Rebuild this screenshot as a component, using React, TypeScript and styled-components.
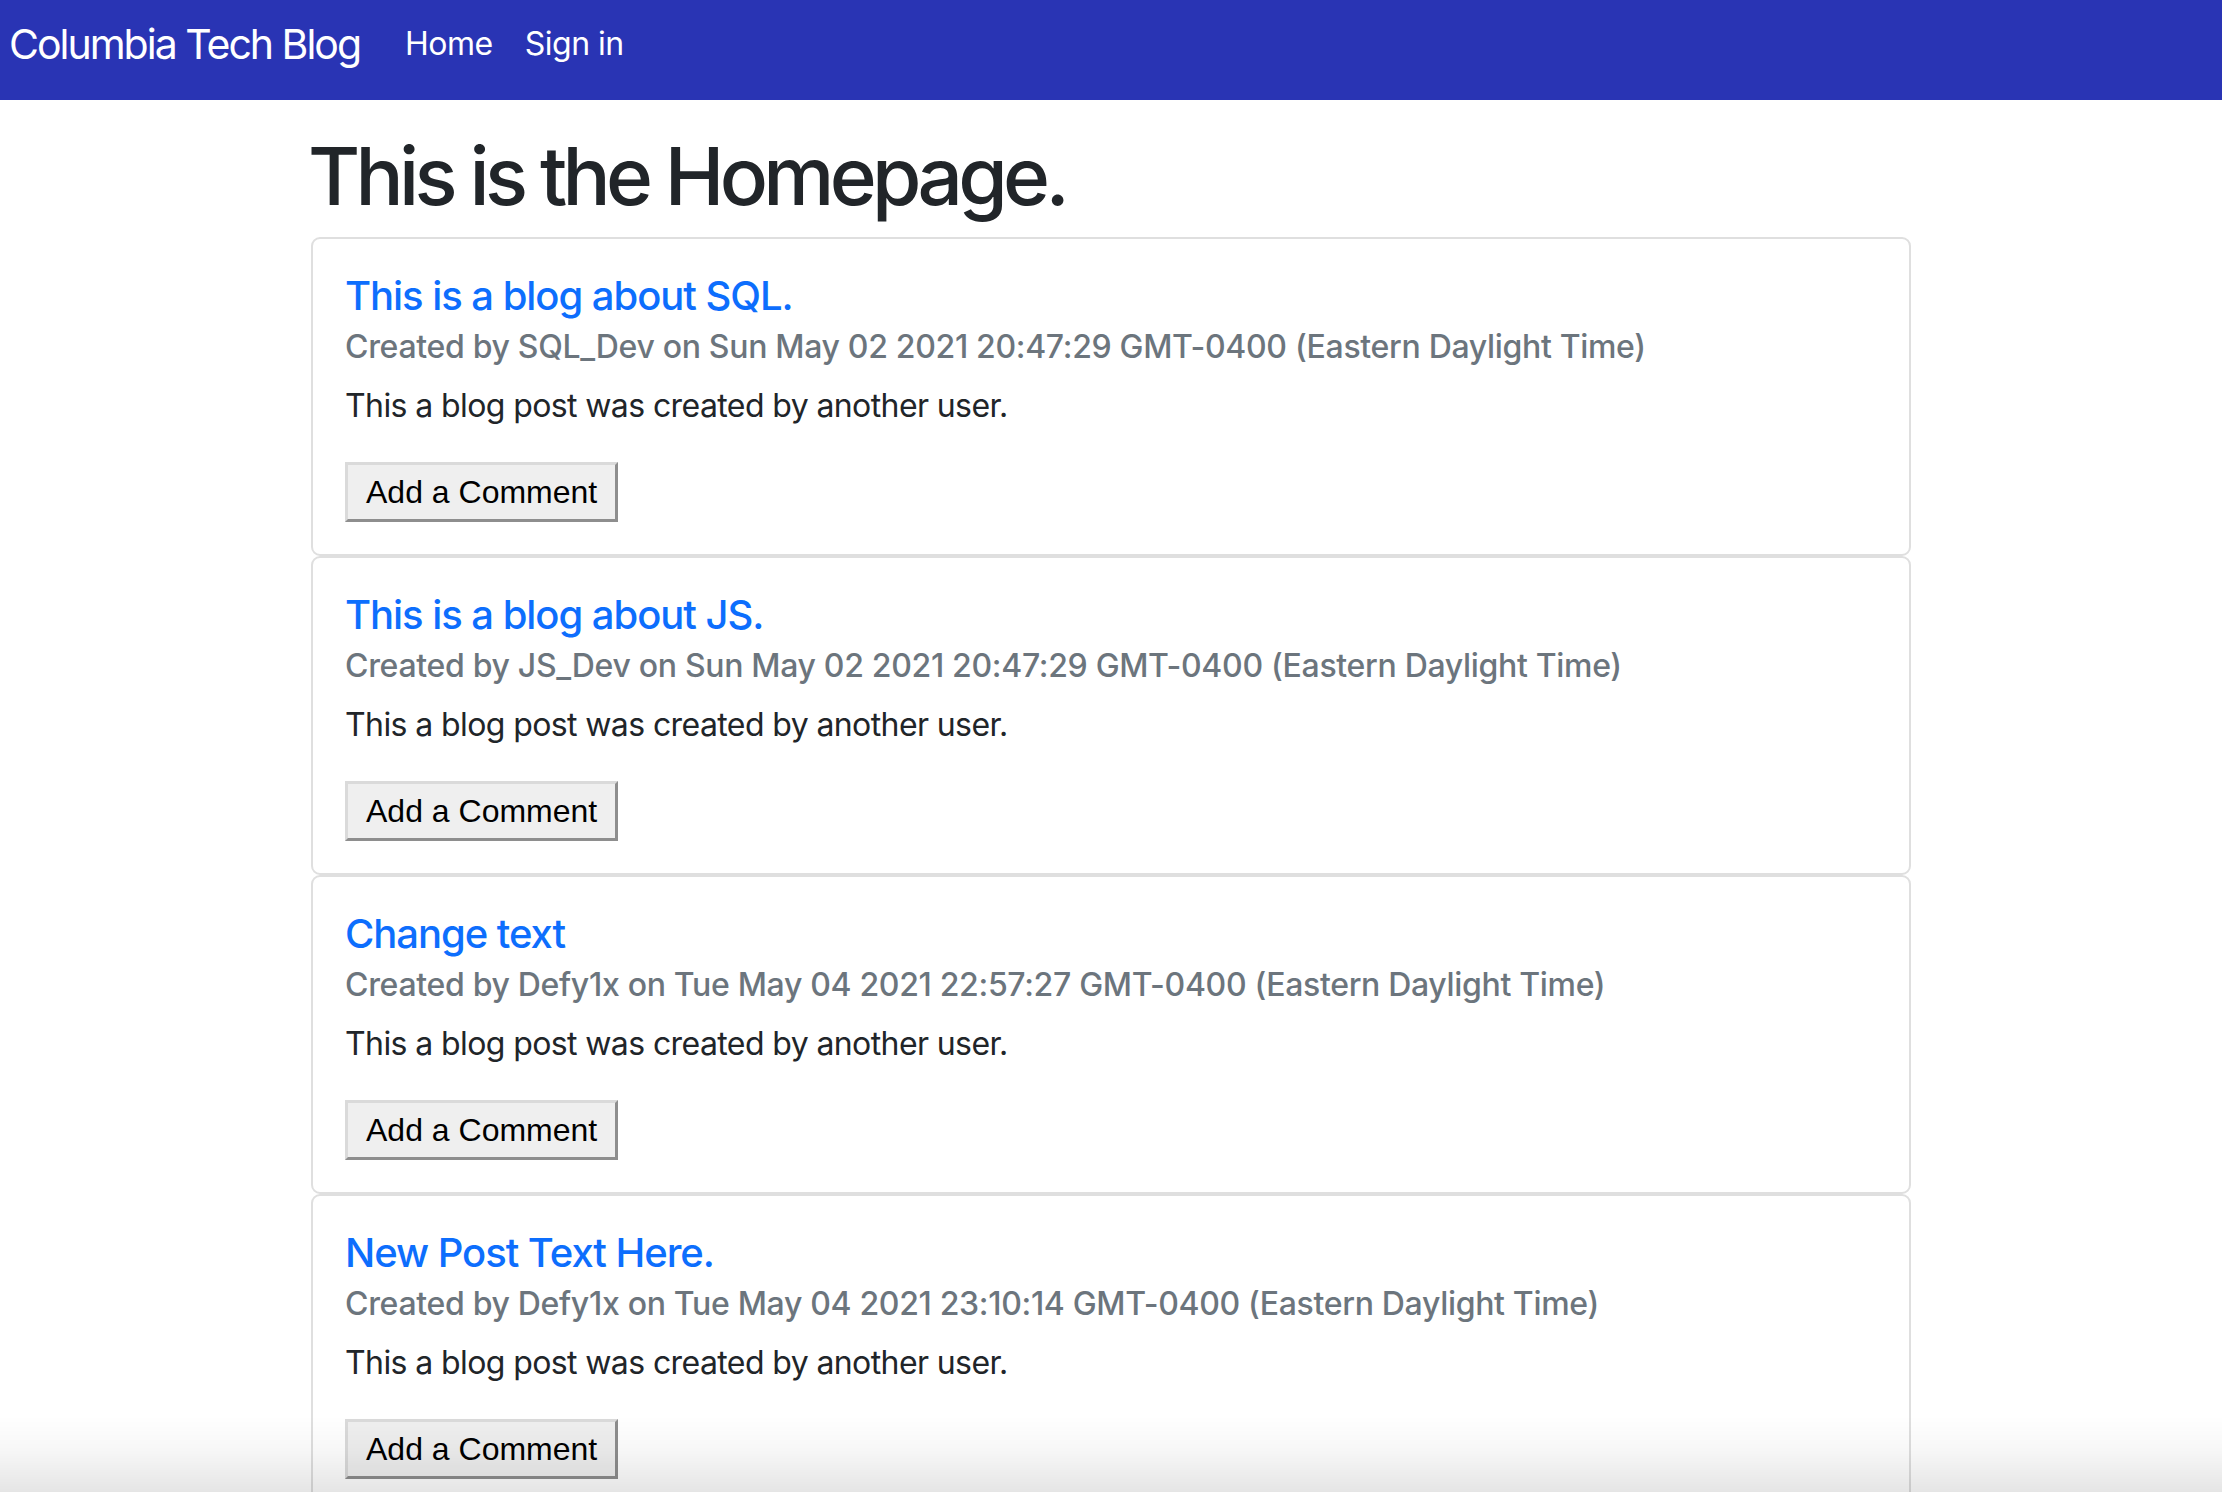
import React from "react";
import styled, { createGlobalStyle } from "styled-components";

const GlobalStyle = createGlobalStyle`
  html, body {
    margin: 0;
    padding: 0;
    background: #ffffff;
  }
  body {
    font-family: Inter, "Noto Sans", "Liberation Sans", sans-serif;
    color: #212529;
    -webkit-font-smoothing: antialiased;
  }
  * { box-sizing: border-box; }
`;

const NavBar = styled.nav`
  height: 100px;
  background: #2934b4;
  display: flex;
  align-items: center;
  padding: 0 0 12px 9px;
`;

const Brand = styled.a`
  font-size: 41px;
  line-height: 50px;
  color: #ffffff;
  text-decoration: none;
  margin-right: 29px;
  white-space: nowrap;
  letter-spacing: -2px;
`;

const NavLinks = styled.div`
  display: flex;
  align-items: center;
`;

const NavLink = styled.a`
  font-size: 32px;
  line-height: 40px;
  color: #ffffff;
  text-decoration: none;
  padding: 0 16px;
  white-space: nowrap;
  letter-spacing: -0.5px;
`;

const Main = styled.main`
  width: 1600px;
  margin: 0 auto;
`;

const PageTitle = styled.h1`
  font-size: 80px;
  line-height: 96px;
  font-weight: 500;
  margin: 28px 0 13px -3px;
  color: #212529;
  letter-spacing: -4.7px;
`;

const PostList = styled.div`
  display: flex;
  flex-direction: column;
`;

const Card = styled.article`
  border: 2px solid #dfdfdf;
  border-radius: 9px;
  padding: 32px;
  background: #fff;
`;

const CardTitle = styled.a`
  display: block;
  font-size: 40px;
  line-height: 48px;
  font-weight: 500;
  color: #0d6efd;
  text-decoration: none;
  margin: 1px 0 8px;
  letter-spacing: -1.05px;
`;

const CardSubtitle = styled.h6`
  font-size: 32px;
  line-height: 38px;
  font-weight: 500;
  color: #6c757d;
  margin: 0 0 16px;
  letter-spacing: -0.32px;
`;

const CardText = styled.p`
  font-size: 32px;
  line-height: 48px;
  margin: 0 0 32px;
  color: #212529;
  letter-spacing: -0.6px;
`;

const CommentButton = styled.button`
  font-family: "Liberation Sans", Arial, sans-serif;
  font-size: 32px;
  line-height: 36px;
  color: #000;
  background: #efefef;
  border-style: solid;
  border-width: 3px;
  border-color: #dadada #8e8e8e #8e8e8e #dadada;
  padding: 9px 18px;
  display: block;
  cursor: pointer;
`;

const BottomFade = styled.div`
  position: fixed;
  left: 0;
  right: 0;
  bottom: 0;
  height: 76px;
  pointer-events: none;
  background: linear-gradient(to bottom, rgba(0, 0, 0, 0) 0%, rgba(0, 0, 0, 0.03) 45%, rgba(0, 0, 0, 0.1) 100%);
`;

type Post = { title: string; author: string; date: string };

const posts: Post[] = [
  { title: "This is a blog about SQL.", author: "SQL_Dev", date: "Sun May 02 2021 20:47:29 GMT-0400 (Eastern Daylight Time)" },
  { title: "This is a blog about JS.", author: "JS_Dev", date: "Sun May 02 2021 20:47:29 GMT-0400 (Eastern Daylight Time)" },
  { title: "Change text", author: "Defy1x", date: "Tue May 04 2021 22:57:27 GMT-0400 (Eastern Daylight Time)" },
  { title: "New Post Text Here.", author: "Defy1x", date: "Tue May 04 2021 23:10:14 GMT-0400 (Eastern Daylight Time)" },
];

export default function App() {
  return (
    <>
      <GlobalStyle />
      <NavBar>
        <Brand href="#">Columbia Tech Blog</Brand>
        <NavLinks>
          <NavLink href="#">Home</NavLink>
          <NavLink href="#">Sign in</NavLink>
        </NavLinks>
      </NavBar>
      <Main>
        <PageTitle>This is the Homepage.</PageTitle>
        <PostList>
          {posts.map((p, i) => (
            <Card key={i}>
              <CardTitle href="#">{p.title}</CardTitle>
              <CardSubtitle>
                Created by {p.author} on {p.date}
              </CardSubtitle>
              <CardText>This a blog post was created by another user.</CardText>
              <CommentButton type="button">Add a Comment</CommentButton>
            </Card>
          ))}
        </PostList>
      </Main>
      <BottomFade />
    </>
  );
}
